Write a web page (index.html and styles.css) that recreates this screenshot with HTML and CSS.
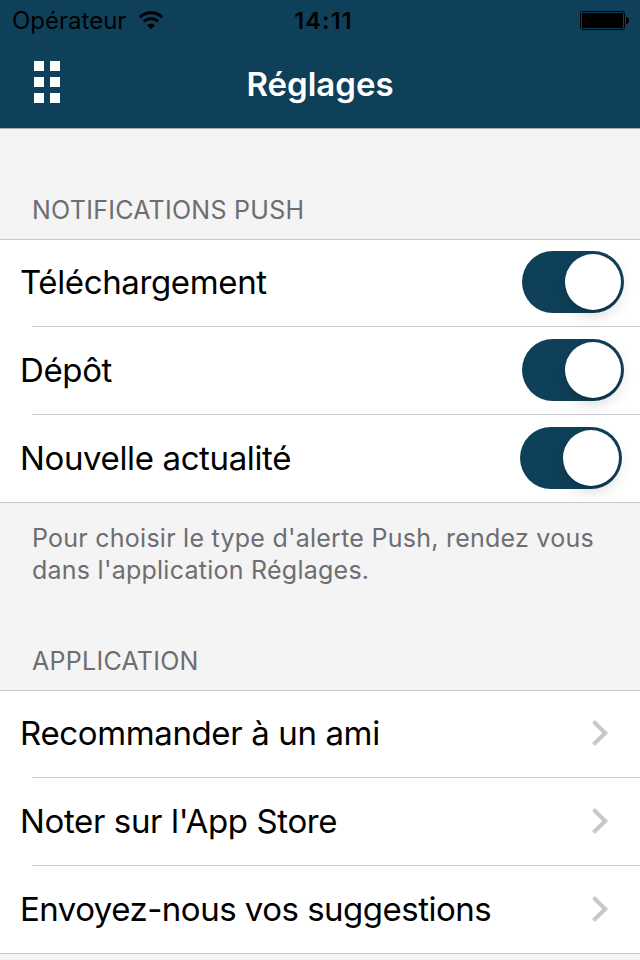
FILE: index.html
```html
<!DOCTYPE html>
<html lang="fr">
<head>
    <meta charset="UTF-8">
    <meta name="viewport" content="width=device-width, initial-scale=1.0">
    <title>Réglages</title>
    <link rel="stylesheet" href="styles.css">
</head>
<body>
    <header class="header">
        <div class="status-bar">
            <div class="carrier">
                <span>Opérateur</span>
                <svg class="wifi" width="26" height="20" viewBox="0 0 26 20">
                    <path d="M1.8 6.2a16 16 0 0 1 22.4 0" fill="none" stroke="#000" stroke-width="3"/>
                    <path d="M5.7 10.6a10.4 10.4 0 0 1 14.6 0" fill="none" stroke="#000" stroke-width="2.8"/>
                    <path d="M9 14.2a5.8 5.8 0 0 1 8 0l-4 4z"/>
                </svg>
            </div>
            <div class="time">14:11</div>
            <svg class="battery" width="50" height="20" viewBox="0 0 50 20">
                <rect x="0.5" y="0.5" width="44" height="18" rx="2.5" fill="none" stroke="#000"/>
                <rect x="2" y="2" width="41" height="15" rx="1"/>
                <path d="M46 6q3 0 3 3.5t-3 3.5z"/>
            </svg>
        </div>
        <div class="nav-bar">
            <button class="menu-btn" aria-label="Menu">
                <i></i><i></i><i></i><i></i><i></i><i></i>
            </button>
            <h1>Réglages</h1>
        </div>
    </header>

    <section>
        <h2>NOTIFICATIONS PUSH</h2>
        <ul class="list">
            <li><span>Téléchargement</span><div class="switch"></div></li>
            <li><span>Dépôt</span><div class="switch"></div></li>
            <li><span>Nouvelle actualité</span><div class="switch switch-last"></div></li>
        </ul>
        <p>Pour choisir le type d'alerte Push, rendez vous<br>dans l'application Réglages.</p>
    </section>

    <section>
        <h2 class="h-app">APPLICATION</h2>
        <ul class="list">
            <li><span>Recommander à un ami</span><svg class="chevron" width="18" height="28" viewBox="0 0 18 28"><path d="M1.5 2.5L13.2 14L1.5 25.5"/></svg></li>
            <li><span>Noter sur l'App Store</span><svg class="chevron" width="18" height="28" viewBox="0 0 18 28"><path d="M1.5 2.5L13.2 14L1.5 25.5"/></svg></li>
            <li><span class="tight">Envoyez-nous vos suggestions</span><svg class="chevron" width="18" height="28" viewBox="0 0 18 28"><path d="M1.5 2.5L13.2 14L1.5 25.5"/></svg></li>
        </ul>
    </section>
</body>
</html>
```
FILE: styles.css
```css
* {
    box-sizing: border-box;
}
body {
    margin: 0;
    height: 960px;
    overflow: hidden;
    background: #f4f4f4;
    font-family: Inter, "Liberation Sans", sans-serif;
    color: #000;
}
.header {
    height: 129px;
    background: #0f4059;
    border-bottom: 1px solid #a9abac;
}
.status-bar {
    height: 41px;
    display: grid;
    grid-template-columns: 1fr auto 1fr;
    align-items: center;
    padding: 1px 10px 0 12px;
    font-size: 24px;
    line-height: 40px;
}
.carrier {
    display: flex;
    align-items: center;
    gap: 12px;
}
.time {
    margin-left: 5px;
    font-weight: 600;
    font-size: 23.5px;
    letter-spacing: 1.1px;
}
.battery {
    justify-self: end;
}
.nav-bar {
    height: 87px;
    display: grid;
    grid-template-columns: 60px 1fr 60px;
    align-items: center;
}
.menu-btn {
    display: grid;
    grid-template-columns: 10px 10px;
    gap: 6px;
    margin: 0 0 5px 34px;
    padding: 0;
    border: none;
    background: none;
}
.menu-btn i {
    height: 10px;
    background: #fff;
}
h1 {
    margin: 0 0 2px;
    color: #fff;
    font-size: 33px;
    font-weight: 600;
    text-align: center;
}
h2 {
    margin: 0;
    height: 110px;
    padding: 65px 32px 0;
    font-size: 25px;
    line-height: 32px;
    letter-spacing: 0.27px;
    font-weight: 400;
    color: #6d6d72;
}
.h-app {
    height: 102px;
    padding-top: 57px;
}
.list {
    list-style: none;
    margin: 0;
    padding: 0;
    background: #fff;
    border-top: 1px solid #c8c7cc;
    border-bottom: 1px solid #c8c7cc;
}
.list li {
    height: 88px;
    display: flex;
    align-items: center;
    justify-content: space-between;
    padding: 0 16px 2px 20px;
    font-size: 33px;
    letter-spacing: -0.37px;
    background: linear-gradient(#c8c7cc, #c8c7cc) 32px 100% / 100% 1px no-repeat;
}
.list li:first-child {
    height: 87px;
    padding-bottom: 3px;
}
.list li:last-child {
    height: 87px;
    padding-bottom: 1px;
    background: none;
}
.list .tight {
    letter-spacing: -0.51px;
}
.switch {
    width: 102px;
    height: 62px;
    padding: 3px;
    border-radius: 31px;
    background: #0f4059;
}
.switch::after {
    content: "";
    display: block;
    width: 56px;
    height: 56px;
    margin-left: auto;
    border-radius: 50%;
    background: #fff;
    box-shadow: 0 6px 14px rgba(0, 0, 0, 0.15), 0 2px 2px rgba(0, 0, 0, 0.08);
}
.switch-last {
    margin-right: 2px;
}
.chevron {
    margin-right: 14px;
    fill: none;
    stroke: #c7c7cc;
    stroke-width: 4;
}
p {
    margin: 0;
    padding: 19px 32px 0;
    height: 85px;
    font-size: 25px;
    line-height: 32px;
    letter-spacing: 0.25px;
    color: #6d6d72;
    white-space: nowrap;
}
```
